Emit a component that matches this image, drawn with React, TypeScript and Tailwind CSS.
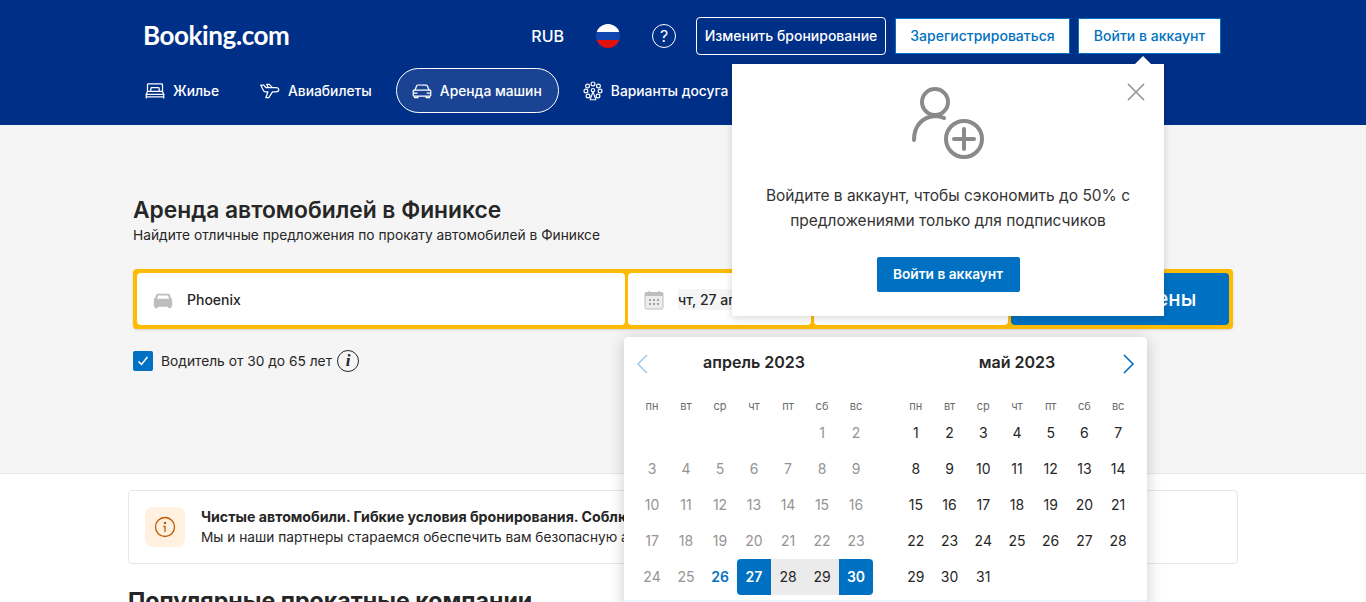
import React from "react";

function Bed() {
  return (
    <svg width="20" height="20" viewBox="0 0 24 24" fill="none" stroke="currentColor" strokeWidth="1.500" strokeLinejoin="round">
      <path d="M3 12.500V4.500a1 1 0 0 1 1-1h16a1 1 0 0 1 1 1v8" />
      <path d="M7 12.500V9a1 1 0 0 1 1-1h8a1 1 0 0 1 1 1v3.500" />
      <path d="M3 12.500 1.500 16h21L21 12.500z" />
      <path d="M1.500 16v5M22.500 16v5M1.500 19h21" />
    </svg>
  );
}
function PlaneIcon() {
  return (
    <svg width="20" height="20" viewBox="0 0 24 24" fill="none" stroke="currentColor" strokeWidth="1.500" strokeLinejoin="round">
      <path d="M1 5h3.500l2.500 3h12c2.200 0 3.500 1.200 3.500 2.500S21 13 19 13h-4l-4.500 7H7l2.500-7H6.500c-1.200 0-2-.5-2.400-1.500z" />
      <path d="M10 8 8 4h3l4 4" />
    </svg>
  );
}
function CarIcon({ size = 20, filled = false }: { size?: number; filled?: boolean }) {
  if (filled) {
    return (
      <svg width={size} height={size} viewBox="0 0 24 24" fill="currentColor">
        <path d="M5.500 4.500h13c.8 0 1.400.5 1.700 1.200L21.500 10H23v1.500h-1c.6.5 1 1.200 1 2V19a1 1 0 0 1-1 1v1a1 1 0 0 1-1 1h-2a1 1 0 0 1-1-1v-1H6v1a1 1 0 0 1-1 1H3a1 1 0 0 1-1-1v-1a1 1 0 0 1-1-1v-5.500c0-.8.400-1.500 1-2H1V10h1.500l1.300-4.300c.3-.7.900-1.200 1.700-1.200zM6 6.500 4.800 10.500h14.400L18 6.500z" />
      </svg>
    );
  }
  return (
    <svg width={size} height={size} viewBox="0 0 24 24" fill="none" stroke="currentColor" strokeWidth="1.500" strokeLinejoin="round">
      <path d="M3.500 11 5.500 6a2 2 0 0 1 1.800-1.200h9.400A2 2 0 0 1 18.500 6l2 5" />
      <path d="M2.500 11h19c.6 0 1 .4 1 1v5a1 1 0 0 1-1 1h-19a1 1 0 0 1-1-1v-5c0-.6.400-1 1-1z" />
      <path d="M3 18v2h4v-2M17 18v2h4v-2M1.500 14.500h5M17.500 14.500h5" />
    </svg>
  );
}
function Attractions() {
  return (
    <svg width="20" height="20" viewBox="0 0 24 24" fill="none" stroke="currentColor" strokeWidth="1.400">
      <circle cx="12" cy="3.500" r="2.300" />
      <circle cx="5.500" cy="6" r="2.300" />
      <circle cx="18.500" cy="6" r="2.300" />
      <circle cx="3.500" cy="12" r="2.300" />
      <circle cx="20.500" cy="12" r="2.300" />
      <circle cx="6" cy="18" r="2.300" />
      <circle cx="18" cy="18" r="2.300" />
      <circle cx="12" cy="11" r="2" />
      <path d="M12 13l-3.500 9.500M12 13l3.500 9.500M8 22.500h8" />
    </svg>
  );
}
function CalendarIcon() {
  return (
    <svg width="20" height="20" viewBox="0 0 20 20" fill="none">
      <rect x="1" y="2.500" width="18" height="16.500" rx="1.500" fill="#ececec" stroke="#bdbdbd" strokeWidth="1" />
      <rect x="1" y="2.500" width="18" height="3.500" fill="#bdbdbd" />
      <path d="M5 1v3M15 1v3" stroke="#bdbdbd" strokeWidth="1.500" />
      <g fill="#a3a3a3">
        <rect x="5" y="9" width="2" height="2" /><rect x="9" y="9" width="2" height="2" /><rect x="13" y="9" width="2" height="2" />
        <rect x="5" y="13" width="2" height="2" /><rect x="9" y="13" width="2" height="2" /><rect x="13" y="13" width="2" height="2" />
      </g>
    </svg>
  );
}

function NavItem({ icon, label, active }: { icon: React.ReactNode; label: string; active?: boolean }) {
  return (
    <div className={active ? "flex items-center h-[45px] w-[163px] pl-[15px] gap-2 rounded-full border border-white bg-white/10 text-white" : "flex items-center h-[45px] gap-2 text-white"}>
      {icon}
      <span className="pt-[1px] text-[13.8px] font-medium whitespace-nowrap">{label}</span>
    </div>
  );
}

const DOW = ["пн", "вт", "ср", "чт", "пт", "сб", "вс"];

function dayCls(kind: string) {
  if (kind === "past") return "text-[#949494]";
  if (kind === "today") return "text-[#0071c2] font-semibold";
  if (kind === "start") return "bg-[#0071c2] text-white font-semibold rounded-l-sm";
  if (kind === "end") return "bg-[#0071c2] text-white font-semibold rounded-r-sm";
  if (kind === "range") return "bg-[#ebebeb] text-[#262626]";
  return "text-[#262626]";
}

function Month({ title, blanks, days, kindOf, widthCls }: { title: string; blanks: number; days: number; kindOf: (d: number) => string; widthCls: string }) {
  const cells: (number | null)[] = [];
  for (let i = 0; i < blanks; i++) cells.push(null);
  for (let d = 1; d <= days; d++) cells.push(d);
  return (
    <div className={widthCls}>
      <div className="h-[49px] flex items-center justify-center text-base font-semibold text-[#262626]">{title}</div>
      <div className="grid grid-cols-7 h-[18px] mt-[11px] items-center text-[11px] text-[#6b6b6b] text-center">
        {DOW.map((d) => (
          <div key={d}>{d}</div>
        ))}
      </div>
      <div className="grid grid-cols-7 auto-rows-[36px] text-sm text-center">
        {cells.map((d, i) => (
          <div key={i} className={"flex items-center justify-center " + (d ? dayCls(kindOf(d)) : "")}>
            {d}
          </div>
        ))}
      </div>
    </div>
  );
}

export default function App() {
  return (
    <div className="relative h-screen overflow-hidden bg-white text-[#262626] font-['Inter','Noto_Sans',sans-serif]">
      <header className="h-[125px] bg-[#002f87] pl-[144px] pr-[145px] text-white">
        <div className="flex items-center h-[68px] pt-[4px]">
          <div className="-ml-[1px] text-[26px] font-bold tracking-[-0.4px] font-['Lato','Inter',sans-serif] leading-none -mt-[3px]">Booking.com</div>
          <div className="ml-auto flex items-center">
            <span className="text-base font-medium">RUB</span>
            <div className="ml-[32px] w-[24px] h-[24px] rounded-full overflow-hidden flex flex-col shrink-0">
              <div className="flex-1 bg-white" />
              <div className="flex-1 bg-[#0f47af]" />
              <div className="flex-1 bg-[#e0100f]" />
            </div>
            <div className="ml-[32px] w-[24px] h-[24px] rounded-full border-[1.5px] border-white flex items-center justify-center text-[16px] shrink-0">?</div>
            <div className="ml-[20px] h-[38px] w-[190px] flex items-center justify-center border border-white rounded-sm text-sm font-medium whitespace-nowrap">Изменить бронирование</div>
            <div className="ml-[9px] h-[36px] w-[175px] flex items-center justify-center bg-white border border-[#0071c2] text-[#0071c2] text-sm font-medium whitespace-nowrap">Зарегистрироваться</div>
            <div className="ml-[8px] h-[36px] w-[143px] flex items-center justify-center bg-white border border-[#0071c2] text-[#0071c2] text-sm font-medium whitespace-nowrap">Войти в аккаунт</div>
          </div>
        </div>
        <nav className="flex items-center ml-[1px]">
          <NavItem icon={<Bed />} label="Жилье" />
          <div className="w-[41px]" />
          <NavItem icon={<PlaneIcon />} label="Авиабилеты" />
          <div className="w-[24px]" />
          <NavItem active icon={<CarIcon />} label="Аренда машин" />
          <div className="w-[24px]" />
          <NavItem icon={<Attractions />} label="Варианты досуга" />
        </nav>
      </header>

      <section className="h-[349px] bg-[#f5f5f5] border-b border-[#e7e7e7] pl-[133px] pr-[133px] pt-[70px]">
        <h1 className="text-[22.8px] leading-[30px] font-semibold">Аренда автомобилей в Финиксе</h1>
        <p className="text-[13.75px] leading-[20px]">Найдите отличные предложения по прокату автомобилей в Финиксе</p>
        <div className="mt-[24px] h-[60px] flex gap-[3px] bg-[#febb02] p-[4px] rounded-sm shadow-sm">
          <div className="w-[488px] bg-white rounded-sm flex items-center pl-[16px] pt-[1px] gap-[14px] text-sm font-medium">
            <span className="text-[#bdbdbd]"><CarIcon filled size={20} /></span>
            Phoenix
          </div>
          <div className="w-[183px] bg-white rounded-sm flex items-center pl-[16px] pt-[1px] gap-[14px] text-sm font-medium">
            <CalendarIcon />
            <span className="bg-[#f5f5f5] leading-[21px] whitespace-nowrap">чт, 27 апр.</span>
          </div>
          <div className="w-[194px] bg-white rounded-sm" />
          <div className="flex-1 bg-[#0071c2] rounded-sm flex items-center justify-center pt-[1px] text-white text-[20.5px] font-medium whitespace-nowrap">Показать цены</div>
        </div>
        <div className="mt-[21px] flex items-center text-[13.75px]">
          <div className="w-[20px] h-[20px] bg-[#0071c2] rounded-[2px] flex items-center justify-center">
            <svg width="14" height="14" viewBox="0 0 14 14" fill="none" stroke="white" strokeWidth="1.500"><path d="M2.500 7.500 5.500 10.500 11.500 3" /></svg>
          </div>
          <span className="ml-[8px]">Водитель от 30 до 65 лет</span>
          <div className="ml-[5px] w-[22px] h-[22px] rounded-full border-[1.5px] border-[#262626] flex items-center justify-center font-['Liberation_Serif',serif] italic font-bold text-[17px]">i</div>
        </div>
      </section>

      <section className="pl-[128px] pr-[128px] pt-[16px]">
        <div className="h-[74px] border border-[#e7e7e7] rounded-sm flex items-center pl-[16px] gap-[16px] overflow-hidden">
          <div className="w-[40px] h-[40px] rounded-lg bg-[#fff0e0] flex items-center justify-center shrink-0">
            <svg width="22" height="22" viewBox="0 0 22 22" fill="none" stroke="#bc5b01" strokeWidth="1.300" strokeLinecap="round">
              <circle cx="11" cy="11" r="9.500" />
              <path d="M11 10.500v5M9.800 10.500H11" />
              <circle cx="11" cy="7" r="0.600" fill="#bc5b01" />
            </svg>
          </div>
          <div className="leading-[21px] whitespace-nowrap">
            <div className="text-[14.2px] font-bold">Чистые автомобили. Гибкие условия бронирования. Соблюдение мер безопасности.</div>
            <div className="text-[13.7px]">Мы и наши партнеры стараемся обеспечить вам безопасную аренду автомобиля.</div>
          </div>
        </div>
        <h2 className="mt-[22px] text-[23.2px] leading-[30px] font-bold whitespace-nowrap">Популярные прокатные компании</h2>
      </section>

      <div className="absolute left-[624px] top-[337px] w-[523px] h-[290px] bg-white rounded-sm shadow-[0_2px_16px_rgba(0,0,0,0.2)] flex flex-col">
        <div className="h-[263px] flex pl-[11px] gap-[26px] shrink-0">
          <Month
            title="апрель 2023"
            blanks={5}
            days={30}
            widthCls="w-[238px]"
            kindOf={(d) => (d < 26 ? "past" : d === 26 ? "today" : d === 27 ? "start" : d === 30 ? "end" : "range")}
          />
          <Month title="май 2023" blanks={0} days={31} widthCls="w-[236px]" kindOf={() => "normal"} />
        </div>
        <div className="flex-1 bg-[#ebf3ff]" />
        <svg className="absolute left-[12px] top-[17px]" width="12" height="20" viewBox="0 0 12 20" fill="none" stroke="#a3cdf0" strokeWidth="1.600"><path d="M11 1 2 10l9 9" /></svg>
        <svg className="absolute right-[12px] top-[17px]" width="12" height="20" viewBox="0 0 12 20" fill="none" stroke="#0071c2" strokeWidth="1.600"><path d="M1 1l9 9-9 9" /></svg>
      </div>

      <div className="absolute left-[732px] top-[64px] w-[432px] h-[252px] bg-white shadow-[0_2px_8px_rgba(0,0,0,0.16)] flex flex-col items-center">
        <div className="absolute right-[13px] -top-[8px] w-0 h-0 border-x-[8px] border-x-transparent border-b-[8px] border-b-white" />
        <svg className="absolute right-[18px] top-[18px]" width="20" height="20" viewBox="0 0 20 20" fill="none" stroke="#8f8f8f" strokeWidth="1.500"><path d="M2 2l16 16M18 2 2 18" /></svg>
        <svg className="mt-[23px] shrink-0" width="76" height="74" viewBox="0 0 76 74" fill="none" stroke="#8a8a8a" strokeWidth="4" strokeLinecap="round">
          <circle cx="25" cy="15" r="13" />
          <path d="M4 53c0-14 8-23 21-24 4 0 7 1 9 2" />
          <circle cx="54" cy="52" r="18" />
          <path d="M54 42v20M44 52h20" />
        </svg>
        <p className="mt-[22px] text-[15.5px] leading-[25px] text-center text-[#333333] w-[400px]">Войдите в аккаунт, чтобы сэкономить до 50% с предложениями только для подписчиков</p>
        <div className="mt-[24px] w-[143px] h-[35px] bg-[#0071c2] rounded-[2px] flex items-center justify-center text-white text-[13.7px] font-semibold whitespace-nowrap">Войти в аккаунт</div>
      </div>
    </div>
  );
}
